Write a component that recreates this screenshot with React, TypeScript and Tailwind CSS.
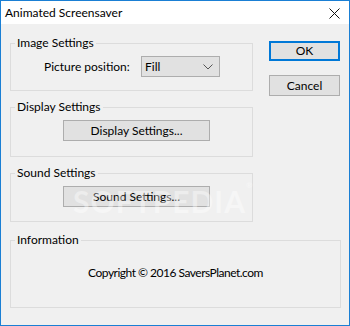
import React from "react";

const font = { fontFamily: 'Lato, "Liberation Sans", Arial, sans-serif' };

function Group({
  label,
  className,
  children,
}: {
  label: string;
  className: string;
  children?: React.ReactNode;
}) {
  return (
    <div className={`border border-[#dcdcdc] ${className}`}>
      <div className="-mt-[9px] ml-[4px] w-fit bg-[#f0f0f0] px-[2px] text-[12px] leading-[16px] text-black">
        {label}
      </div>
      {children}
    </div>
  );
}

function Btn({ children, className }: { children: React.ReactNode; className: string }) {
  return (
    <div
      className={`flex items-center justify-center border border-[#adadad] bg-[#e1e1e1] text-[12px] leading-[16px] text-black ${className}`}
    >
      {children}
    </div>
  );
}

export default function App() {
  return (
    <div
      className="relative flex h-[326px] w-[350px] flex-col overflow-hidden border border-[#1a7fd4] bg-[#f0f0f0]"
      style={font}
    >
      <div className="flex h-[23px] shrink-0 items-center justify-between bg-white pl-[4px] pr-[9px]">
        <span className="text-[12px] leading-[16px] text-black">Animated Screensaver</span>
        <svg width="11" height="11" viewBox="0 0 11 11" className="mt-[1px]">
          <path d="M0.5 0.5 L10.5 10.5 M10.5 0.5 L0.5 10.5" stroke="#111" strokeWidth="1" fill="none" />
        </svg>
      </div>

      <div className="flex flex-col pl-[9px] pt-[19px]">
        <div className="flex">
          <div className="flex w-[243px] flex-col">
            <Group label="Image Settings" className="h-[48px]">
              <div className="mt-[5px] flex items-center">
                <span className="ml-[33px] w-[97px] text-[12px] leading-[16px] text-black">
                  Picture position:
                </span>
                <div className="flex h-[21px] w-[79px] items-center justify-between border border-[#adadad] bg-[#e1e1e1] pl-[3px] pr-[6px] text-[12px] text-black">
                  <span>Fill</span>
                  <svg width="10" height="6" viewBox="0 0 10 6">
                    <path d="M0.5 0.5 L5 5 L9.5 0.5" stroke="#555" strokeWidth="1" fill="none" />
                  </svg>
                </div>
              </div>
            </Group>
            <Group label="Display Settings" className="mt-[16px] h-[50px]">
              <Btn className="ml-[52px] mt-[5px] h-[21px] w-[147px]">Display Settings...</Btn>
            </Group>
            <Group label="Sound Settings" className="mt-[16px] h-[49px]">
              <Btn className="ml-[52px] mt-[5px] h-[21px] w-[147px]">Sound Settings...</Btn>
            </Group>
          </div>
          <div className="ml-[16px] flex w-[71px] flex-col">
            <div className="-mt-[2px] flex h-[20px] items-center justify-center border-2 border-[#0078d7] bg-[#e1e1e1] text-[12px] leading-[16px] text-black">
              OK
            </div>
            <Btn className="mt-[14px] h-[21px]">Cancel</Btn>
          </div>
        </div>
        <Group label="Information" className="mt-[18px] h-[68px] w-[331px]">
          <div className="mt-[17px] text-center text-[12px] leading-[16px] tracking-[-0.5px] text-black">
            Copyright © 2016 SaversPlanet.com
          </div>
        </Group>
      </div>

      <div className="pointer-events-none absolute left-[72px] top-[178px] select-none text-[30px] font-bold tracking-[1px] text-white opacity-40">
        SOFTPEDIA<span className="align-top text-[8px]">®</span>
      </div>
    </div>
  );
}
